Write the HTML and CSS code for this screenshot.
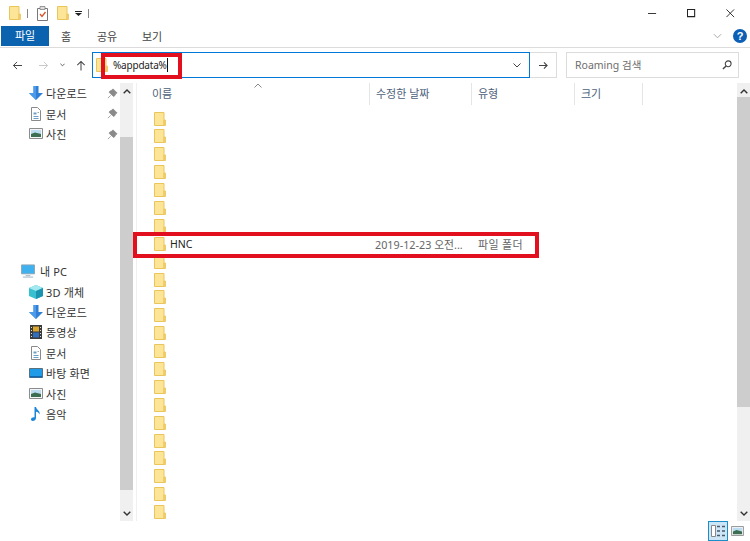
FILE: index.html
```html
<!DOCTYPE html>
<html lang="ko">
<head>
<meta charset="utf-8">
<title>Roaming</title>
<link rel="stylesheet" href="styles.css">
</head>
<body>
<svg class="defs" width="0" height="0" aria-hidden="true">
  <symbol id="folder" viewBox="0 0 12 14">
    <path d="M.5.500h9.500v13H.5z" fill="#fde597" stroke="#eac55c"/>
    <path d="M10 8h1.500v5.500H10z" fill="#f6d06a" stroke="#eac55c" stroke-width=".8"/>
  </symbol>
  <symbol id="down" viewBox="0 0 14 14">
    <path d="M4.500 0h5v7H14l-7 7-7-7h4.500z" fill="#2f7fd6"/>
    <path d="M4.500 0h2.500v14L0 7h4.500z" fill="#4b9bea"/>
  </symbol>
  <symbol id="doc" viewBox="0 0 12 14">
    <path d="M1.500.5h6l3 3v10h-9z" fill="#fff" stroke="#8a8a8a"/>
    <path d="M3.500 5.500h3v2h-3zM3.500 9h5v1h-5zM3.500 11h5v1h-5z" fill="#6a9fc8"/>
    <path d="M7.500 5h1.500v1h-1.500z" fill="#9aa"/>
  </symbol>
  <symbol id="pic" viewBox="0 0 14 11">
    <path d="M.5.500h13v10H.5z" fill="#f4f6f8" stroke="#8c8c8c"/>
    <path d="M2 2h10v4H2z" fill="#bcdcf2"/>
    <path d="M2 6l4-1.500 6 1.500v3H2z" fill="#3c6f52"/>
  </symbol>
  <symbol id="pin" viewBox="0 0 10 10">
    <path d="M5.500.8l3.700 3.700-1.200.6-1 2-1 .6L1.900 3.900l.6-1 2-1zM3.300 6.700L.8 9.200" fill="#8a8a8a" stroke="#8a8a8a" stroke-width=".7"/>
  </symbol>
  <symbol id="up" viewBox="0 0 8 5">
    <path d="M.7 4.300L4 1l3.300 3.300" fill="none" stroke="#333" stroke-width="1.400"/>
  </symbol>
</svg>

<div class="window">
  <header class="titlebar">
    <div class="qat">
      <svg class="q-folder"><use href="#folder"/></svg>
      <span class="q-sep"></span>
      <svg class="q-doc" viewBox="0 0 12 15">
        <path d="M.5 2.500h10v12H.5z" fill="#fff" stroke="#777"/>
        <path d="M3 .5h5v3H3z" fill="#ddd" stroke="#777" stroke-width=".7"/>
        <path d="M3 8l2 2.500L8.500 6" fill="none" stroke="#d9532c" stroke-width="1.300"/>
      </svg>
      <svg class="q-folder q-folder2"><use href="#folder"/></svg>
      <svg class="q-drop" viewBox="0 0 7 5"><path d="M0 0h7v1H0zM0 2h7L3.500 5z" fill="#222"/></svg>
      <span class="q-sep q-sep2"></span>
    </div>
    <div class="winctl">
      <svg viewBox="0 0 10 10"><path d="M0 5h9" stroke="#222"/></svg>
      <svg viewBox="0 0 10 10"><path d="M.5.500h8v8h-8z" fill="none" stroke="#222" stroke-width="1.200"/></svg>
      <svg viewBox="0 0 10 10"><path d="M.5.500l8.500 8.500M9 .5L.5 9" stroke="#222"/></svg>
    </div>
  </header>

  <nav class="ribbon">
    <span class="tab tab-file">파일</span>
    <span class="tab tab-home">홈</span>
    <span class="tab tab-share">공유</span>
    <span class="tab tab-view">보기</span>
    <svg class="rib-chev" viewBox="0 0 10 6"><path d="M1 1l4 4 4-4" fill="none" stroke="#a8a8a8" stroke-width="1.100"/></svg>
    <span class="help">?</span>
  </nav>

  <div class="addr-row">
    <div class="nav-btns">
      <svg class="n-back" viewBox="0 0 12 10"><path d="M11 5H1.500M5.500 1l-4 4 4 4" fill="none" stroke="#444" stroke-width="1.100"/></svg>
      <svg class="n-fwd" viewBox="0 0 12 10"><path d="M1 5h9.500M6.500 1l4 4-4 4" fill="none" stroke="#c8c8c8" stroke-width="1.100"/></svg>
      <svg class="n-hist" viewBox="0 0 6 4"><path d="M.5.500L3 3 5.500.5" fill="none" stroke="#444"/></svg>
      <svg class="n-up" viewBox="0 0 10 12"><path d="M5 11.500V1.500M1 5.500l4-4 4 4" fill="none" stroke="#444" stroke-width="1.100"/></svg>
    </div>
    <div class="addr-box">
      <svg class="addr-folder"><use href="#folder"/></svg>
      <span class="addr-text">%appdata%</span><span class="caret"></span>
      <svg class="addr-chev" viewBox="0 0 8 5"><path d="M.5.500L4 4 7.500.5" fill="none" stroke="#444"/></svg>
    </div>
    <div class="go-btn">
      <svg viewBox="0 0 11 10"><path d="M.5 5h9M6 1.500L9.500 5 6 8.500" fill="none" stroke="#444" stroke-width="1.200"/></svg>
    </div>
    <div class="search-box">
      <span class="search-text">Roaming 검색</span>
      <svg viewBox="0 0 11 11"><circle cx="6.800" cy="4.200" r="3.200" fill="none" stroke="#444" stroke-width="1.200"/><path d="M4.500 6.500L1 10" stroke="#444" stroke-width="1.500"/></svg>
    </div>
  </div>

  <main class="main">
    <aside class="sidebar">
      <ul class="tree">
        <li class="tree-item"><svg class="t-ico t-down"><use href="#down"/></svg><span>다운로드</span><svg class="t-pin"><use href="#pin"/></svg></li>
        <li class="tree-item"><svg class="t-ico t-doc"><use href="#doc"/></svg><span>문서</span><svg class="t-pin"><use href="#pin"/></svg></li>
        <li class="tree-item"><svg class="t-ico t-pic"><use href="#pic"/></svg><span>사진</span><svg class="t-pin"><use href="#pin"/></svg></li>
      </ul>
      <ul class="tree tree-pc">
        <li class="tree-item tree-root">
          <svg class="t-ico t-pc" viewBox="0 0 15 14"><path d="M.5.500h14v9.500H.5z" fill="#3fb1ee" stroke="#8aa4b4"/><path d="M5 12h5M2 13.500h11" stroke="#9ab0bd"/></svg>
          <span>내 PC</span>
        </li>
        <li class="tree-item">
          <svg class="t-ico" viewBox="0 0 14 14"><path d="M7 0l7 3v8l-7 3-7-3V3z" fill="#38c0d0"/><path d="M7 0l7 3-7 3-7-3z" fill="#a6e8f0"/><path d="M7 6v8l7-3V3z" fill="#1b94b0"/></svg>
          <span>3D 개체</span>
        </li>
        <li class="tree-item"><svg class="t-ico t-down"><use href="#down"/></svg><span>다운로드</span></li>
        <li class="tree-item">
          <svg class="t-ico t-film" viewBox="0 0 12 14"><path d="M0 0h12v14H0z" fill="#3b3b3b"/><path d="M3 1.500h6v5H3z" fill="#d9a62e"/><path d="M3 7.500h6v5H3z" fill="#2f6fc0"/><path d="M1 2h1v1H1zM1 5h1v1H1zM1 8h1v1H1zM1 11h1v1H1zM10 2h1v1h-1zM10 5h1v1h-1zM10 8h1v1h-1zM10 11h1v1h-1z" fill="#ddd"/></svg>
          <span>동영상</span>
        </li>
        <li class="tree-item"><svg class="t-ico t-doc"><use href="#doc"/></svg><span>문서</span></li>
        <li class="tree-item">
          <svg class="t-ico t-desk" viewBox="0 0 14 10"><path d="M.5.500h13v9H.5z" fill="#1f9be8" stroke="#59707f"/><path d="M1 8h12v1.500H1z" fill="#1168b0"/></svg>
          <span>바탕 화면</span>
        </li>
        <li class="tree-item"><svg class="t-ico t-pic"><use href="#pic"/></svg><span>사진</span></li>
        <li class="tree-item">
          <svg class="t-ico t-music" viewBox="0 0 10 14"><path d="M3.500 0h1.500c.5 3 4.500 3.500 3.500 7.500C8 6 6.500 5 5 4.800V11c0 2-1.800 3-3.200 3C.6 14 0 13.300 0 12.300c0-1.300 1.800-2.300 3.500-2z" fill="#1b86d8"/></svg>
          <span>음악</span>
        </li>
      </ul>
    </aside>

    <div class="scroll scroll-left">
      <div class="sb-top sb-top-left"><svg><use href="#up"/></svg></div>
      <div class="sb-thumb sb-thumb-left"></div>
      <div class="sb-bottom"><svg class="flip"><use href="#up"/></svg></div>
    </div>
    <div class="divider"></div>

    <section class="files">
      <div class="head">
        <svg class="sort" viewBox="0 0 8 5"><path d="M.5 4.500L4 1l3.500 3.500" fill="none" stroke="#888"/></svg>
        <div class="col col-name">이름</div>
        <div class="col col-date">수정한 날짜</div>
        <div class="col col-type">유형</div>
        <div class="col col-size">크기</div>
      </div>
      <div class="rows">
        <div class="row"><svg class="f-ico"><use href="#folder"/></svg></div>
        <div class="row"><svg class="f-ico"><use href="#folder"/></svg></div>
        <div class="row"><svg class="f-ico"><use href="#folder"/></svg></div>
        <div class="row"><svg class="f-ico"><use href="#folder"/></svg></div>
        <div class="row"><svg class="f-ico"><use href="#folder"/></svg></div>
        <div class="row"><svg class="f-ico"><use href="#folder"/></svg></div>
        <div class="row"><svg class="f-ico"><use href="#folder"/></svg></div>
        <div class="row">
          <svg class="f-ico"><use href="#folder"/></svg>
          <span class="f-name">HNC</span>
          <span class="f-date">2019-12-23 오전...</span>
          <span class="f-type">파일 폴더</span>
        </div>
        <div class="row"><svg class="f-ico"><use href="#folder"/></svg></div>
        <div class="row"><svg class="f-ico"><use href="#folder"/></svg></div>
        <div class="row"><svg class="f-ico"><use href="#folder"/></svg></div>
        <div class="row"><svg class="f-ico"><use href="#folder"/></svg></div>
        <div class="row"><svg class="f-ico"><use href="#folder"/></svg></div>
        <div class="row"><svg class="f-ico"><use href="#folder"/></svg></div>
        <div class="row"><svg class="f-ico"><use href="#folder"/></svg></div>
        <div class="row"><svg class="f-ico"><use href="#folder"/></svg></div>
        <div class="row"><svg class="f-ico"><use href="#folder"/></svg></div>
        <div class="row"><svg class="f-ico"><use href="#folder"/></svg></div>
        <div class="row"><svg class="f-ico"><use href="#folder"/></svg></div>
        <div class="row"><svg class="f-ico"><use href="#folder"/></svg></div>
        <div class="row"><svg class="f-ico"><use href="#folder"/></svg></div>
        <div class="row"><svg class="f-ico"><use href="#folder"/></svg></div>
        <div class="row"><svg class="f-ico"><use href="#folder"/></svg></div>
      </div>
    </section>

    <div class="scroll scroll-right">
      <div class="sb-top"><svg><use href="#up"/></svg></div>
      <div class="sb-thumb sb-thumb-right"></div>
      <div class="sb-bottom"><svg class="flip"><use href="#up"/></svg></div>
    </div>
  </main>

  <footer class="status">
    <div class="view-btn">
      <svg viewBox="0 0 15 12"><path d="M.5.500h4v11h-4z" fill="#fff" stroke="#888"/><path d="M6 1.500h3M11 1.500h3M6 6h3M11 6h3M6 10.500h3M11 10.500h3" stroke="#4a5a6a" stroke-width="1.300"/></svg>
    </div>
    <svg class="view-large"><use href="#pic"/></svg>
  </footer>

  <div class="mark mark-addr"></div>
  <div class="mark mark-row"></div>
</div>
</body>
</html>
```

FILE: styles.css
```css
* { box-sizing: border-box; }
html, body { margin: 0; padding: 0; background: #fff; }
body {
  font-family: "Noto Sans", "Noto Sans CJK KR", sans-serif;
  font-size: 11px;
  color: #333;
}
ul { list-style: none; margin: 0; padding: 0; }
svg { display: block; flex: none; }
.defs { position: absolute; }

.window {
  position: relative;
  width: 750px;
  height: 541px;
  display: flex;
  flex-direction: column;
  overflow: hidden;
}

/* title bar */
.titlebar { height: 25px; display: flex; justify-content: space-between; flex: none; }
.qat { display: flex; align-items: center; padding: 1px 0 0 9px; }
.q-folder { width: 12px; height: 14px; }
.q-sep { width: 1px; height: 9px; background: #888; margin-left: 6px; }
.q-doc { width: 12px; height: 15px; margin-left: 9px; }
.q-folder2 { margin-left: 8px; }
.q-drop { width: 7px; height: 5px; margin-left: 6px; }
.q-sep2 { margin-left: 6px; }
.winctl { display: flex; align-items: center; gap: 30px; padding: 1px 15px 0 0; }
.winctl svg { width: 9px; height: 9px; }

/* ribbon */
.ribbon {
  height: 23px;
  flex: none;
  display: flex;
  align-items: center;
  position: relative;
  border-bottom: 1px solid #dcdcdc;
  padding-left: 1px;
  padding-bottom: 1px;
  color: #444;
}
.tab { display: block; text-align: center; }
.tab-file {
  width: 48px;
  height: 20px;
  line-height: 19px;
  background: #0b63b0;
  color: #fff;
}
.tab-home { width: 34px; }
.tab-share { width: 48px; }
.tab-view { width: 42px; }
.rib-chev { width: 9px; height: 6px; margin-left: auto; }
.help {
  width: 14px;
  height: 14px;
  margin: 0 3px 0 11px;
  border-radius: 50%;
  background: #0c5fb5;
  color: #fff;
  font: bold 11px/14px "Liberation Sans", sans-serif;
  text-align: center;
}

/* address row */
.addr-row { height: 35px; flex: none; display: flex; padding-top: 4px; }
.nav-btns { width: 92px; display: flex; align-items: center; height: 26px; }
.n-back { width: 11px; height: 9px; margin-left: 12px; }
.n-fwd { width: 11px; height: 9px; margin-left: 15px; }
.n-hist { width: 5px; height: 4px; margin-left: 11px; }
.n-up { width: 10px; height: 11px; margin-left: 11px; }
.addr-box {
  width: 438px;
  height: 26px;
  border: 1px solid #0078d7;
  display: flex;
  align-items: center;
  padding: 0 8px 0 3px;
}
.addr-folder { width: 12px; height: 14px; }
.addr-text { margin: 0 0 1px 5px; font-size: 10px; letter-spacing: -.2px; color: #222; }
.caret { width: 1px; height: 14px; background: #111; }
.addr-chev { width: 8px; height: 5px; margin-left: auto; }
.go-btn {
  width: 27px;
  height: 26px;
  border: 1px solid #dcdcdc;
  border-left: 0;
  display: flex;
  align-items: center;
  justify-content: center;
}
.go-btn svg { width: 11px; height: 9px; }
.search-box {
  width: 173px;
  height: 26px;
  margin-left: 9px;
  border: 1px solid #dcdcdc;
  display: flex;
  align-items: center;
  justify-content: space-between;
  padding: 0 6px 0 8px;
  color: #6d6d6d;
}
.search-text { font-size: 10.5px; margin-bottom: 1px; }
.search-box svg { width: 10px; height: 10px; }

/* main */
.main { height: 438px; flex: none; display: flex; }
.sidebar { width: 120px; flex: none; color: #333; }
.tree-item {
  height: 20.4px;
  display: flex;
  align-items: center;
  position: relative;
  padding-left: 29px;
  gap: 3px;
  letter-spacing: .15px;
}
.tree-pc { margin-top: 116.8px; }
.tree-root { padding-left: 21px; gap: 5px; }
.t-ico { width: 14px; height: 14px; }
.t-doc { width: 12px; margin: 0 1px; }
.t-pic { height: 11px; }
.t-pc { width: 14px; }
.t-film { width: 12px; margin: 0 1px; }
.t-desk { height: 10px; }
.t-music { width: 10px; margin: 0 2px; }
.t-pin { width: 11px; height: 11px; position: absolute; left: 107px; top: 5px; }

.scroll { width: 13px; flex: none; background: #f0f0f0; display: flex; flex-direction: column; height: 438px; }
.sb-top { height: 14px; display: flex; justify-content: center; padding-top: 6px; flex: none; }
.sb-top-left { height: 54px; }
.sb-top svg, .sb-bottom svg { width: 8px; height: 5px; }
.sb-thumb { background: #cdcdcd; flex: none; }
.sb-thumb-left { height: 353px; }
.sb-thumb-right { height: 310px; }
.sb-bottom { flex: 1; display: flex; justify-content: center; align-items: flex-end; padding-bottom: 5px; }
.flip { transform: scaleY(-1); }
.divider { width: 1px; margin-left: 3px; background: #f0f0f0; flex: none; }

.files { flex: 1; min-width: 0; overflow: hidden; }
.head {
  position: relative;
  height: 22px;
  display: flex;
  color: #4c607a;
}
.sort { position: absolute; left: 117px; top: 0; width: 8px; height: 5px; }
.col {
  height: 22px;
  line-height: 21px;
  padding-left: 6px;
  border-right: 1px solid #e5e5e5;
}
.col-name { width: 233px; padding-left: 15px; }
.col-date { width: 102px; }
.col-type { width: 103px; }
.col-size { width: 68px; }
.rows { padding-top: 4.6px; }
.row {
  height: 17.9px;
  display: flex;
  align-items: center;
  padding-left: 17px;
  color: #222;
}
.f-ico { width: 12px; height: 14px; }
.f-name { margin-left: 4px; width: 205px; font-size: 10.5px; }
.f-date { width: 103px; color: #666; font-size: 10.8px; }
.f-type { color: #666; letter-spacing: .3px; }

/* status bar */
.status { flex: 1; display: flex; align-items: center; padding-left: 708px; }
.view-btn {
  width: 20px;
  height: 20px;
  background: #cde6f7;
  border: 1px solid #1b8ec9;
  display: flex;
  align-items: center;
  justify-content: center;
}
.view-btn svg { width: 15px; height: 12px; }
.view-large { width: 13px; height: 10px; margin-left: 3px; }

/* red callouts */
.mark { position: absolute; border: 4px solid #e2101f; }
.mark-addr { left: 101px; top: 53px; width: 81px; height: 26px; }
.mark-row { left: 133px; top: 232px; width: 406px; height: 26px; }
```
